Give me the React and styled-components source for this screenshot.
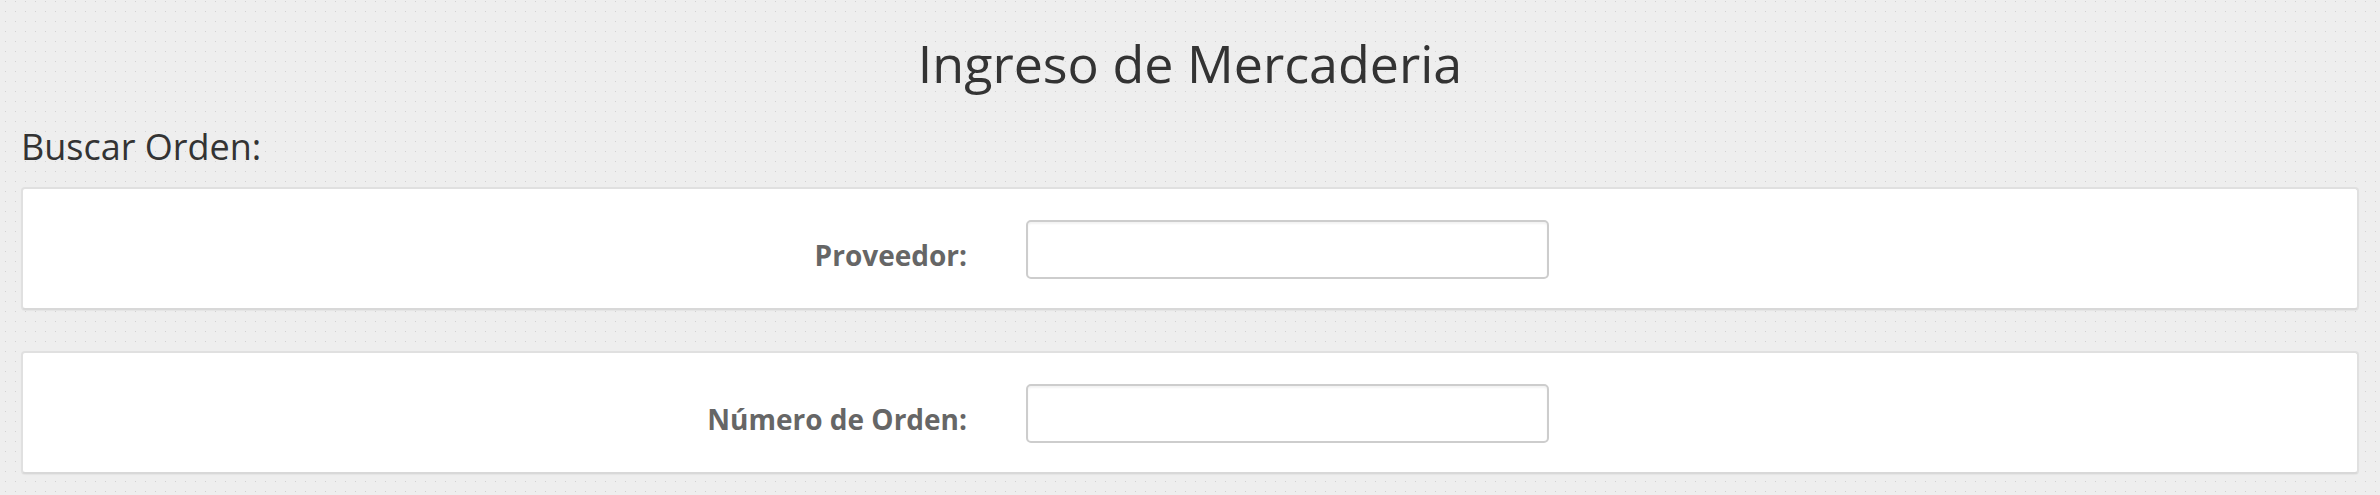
import React from 'react';
import styled, { createGlobalStyle } from 'styled-components';

const GlobalStyle = createGlobalStyle`
  html, body {
    margin: 0;
    padding: 0;
  }

  body {
    font-family: 'Open Sans', 'Liberation Sans', sans-serif;
    color: #333;
    background-color: #eeeeee;
    background-image:
      linear-gradient(to bottom, transparent 1px, #eeeeee 1px),
      linear-gradient(to right, #eeeeee 5px, #d2d2d2 5px, #d2d2d2 6px, #eeeeee 6px);
    background-size: 10px 10px;
    background-position: 0 1px;
  }
`;

const Page = styled.main`
  padding: 0 21px;
`;

const Title = styled.h1`
  margin: 34px 0 0;
  font-size: 52px;
  font-weight: 400;
  line-height: 57px;
  text-align: center;
  color: #333;
`;

const SectionLabel = styled.h4`
  margin: 36px 0 20px;
  font-size: 36px;
  font-weight: 400;
  line-height: 39.6px;
  color: #333;
`;

const Card = styled.section`
  background: #fff;
  border: 2px solid #e0e0e0;
  border-bottom-color: #d8d8d8;
  border-radius: 4px;
  box-shadow: 0 1px 1px rgba(0, 0, 0, 0.04);
  padding: 31px 0 29px;
  margin-bottom: 41px;
`;

const FieldRow = styled.div`
  display: grid;
  grid-template-columns: 944px 523px;
  column-gap: 59px;
`;

const FieldLabel = styled.label`
  align-self: start;
  padding-top: 16px;
  font-size: 28px;
  font-weight: 700;
  line-height: 38.6px;
  text-align: right;
  color: #666;
`;

const TextInput = styled.input`
  box-sizing: border-box;
  width: 523px;
  height: 59px;
  padding: 9px 18px;
  font-family: inherit;
  font-size: 21px;
  color: #555;
  background: #fff;
  border: 2px solid #cdcdcd;
  border-radius: 5px;
  box-shadow: inset 0 2px 2px rgba(0, 0, 0, 0.05);
  outline: none;
`;

const fields = [
  { id: 'proveedor', label: 'Proveedor:' },
  { id: 'numeroOrden', label: 'Número de Orden:' },
];

const App = () => {
  return (
    <>
      <GlobalStyle />
      <Page>
        <Title>Ingreso de Mercaderia</Title>
        <SectionLabel>Buscar Orden:</SectionLabel>
        {fields.map((field) => (
          <Card key={field.id}>
            <FieldRow>
              <FieldLabel htmlFor={field.id}>{field.label}</FieldLabel>
              <TextInput id={field.id} type="text" />
            </FieldRow>
          </Card>
        ))}
      </Page>
    </>
  );
};

export default App;
